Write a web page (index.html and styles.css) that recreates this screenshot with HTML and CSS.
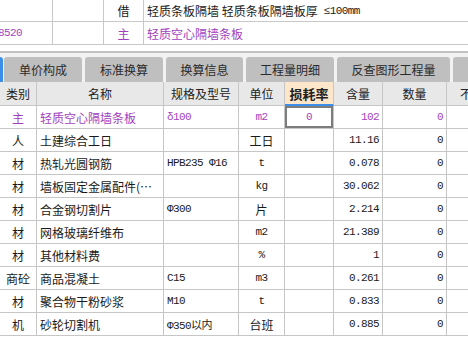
FILE: index.html
```html
<!DOCTYPE html>
<html lang="zh-CN">

<head>
    <meta charset="UTF-8">
    <title>工料机</title>
    <link rel="stylesheet" href="styles.css">
</head>

<body>
    <div class="top">
        <div class="top-row first">
            <div class="c1"></div>
            <div class="c2"></div>
            <div class="c3">借</div>
            <div class="c4">轻质条板隔墙 轻质条板隔墙板厚 <span class="mono">≤100mm</span></div>
        </div>
        <div class="top-row purple">
            <div class="c1"><span class="mono code">8520</span></div>
            <div class="c2"></div>
            <div class="c3">主</div>
            <div class="c4">轻质空心隔墙条板</div>
        </div>
    </div>

    <div class="splitter"></div>

    <div class="tabs">
        <div class="tab-edge"></div>
        <div class="tab t1">单价构成</div>
        <div class="tab t2">标准换算</div>
        <div class="tab t3">换算信息</div>
        <div class="tab t4">工程量明细</div>
        <div class="tab t5">反查图形工程量</div>
        <div class="tab t6"></div>
    </div>

    <div class="grid">
        <div class="row head">
            <div class="cell ctr">类别</div>
            <div class="cell ctr">名称</div>
            <div class="cell ctr">规格及型号</div>
            <div class="cell ctr">单位</div>
            <div class="cell ctr hot">损耗率</div>
            <div class="cell ctr">含量</div>
            <div class="cell ctr">数量</div>
            <div class="cell more">不计价</div>
        </div>
        <div class="row purple">
            <div class="cell ctr">主</div>
            <div class="cell">轻质空心隔墙条板</div>
            <div class="cell mono">δ100</div>
            <div class="cell ctr mono">m2</div>
            <div class="cell ctr mono sel">0</div>
            <div class="cell num mono">102</div>
            <div class="cell num mono">0</div>
            <div class="cell"></div>
        </div>
        <div class="row">
            <div class="cell ctr">人</div>
            <div class="cell">土建综合工日</div>
            <div class="cell mono"></div>
            <div class="cell ctr">工日</div>
            <div class="cell"></div>
            <div class="cell num mono">11.16</div>
            <div class="cell num mono">0</div>
            <div class="cell"></div>
        </div>
        <div class="row">
            <div class="cell ctr">材</div>
            <div class="cell">热轧光圆钢筋</div>
            <div class="cell mono">HPB235 Φ16</div>
            <div class="cell ctr mono">t</div>
            <div class="cell"></div>
            <div class="cell num mono">0.078</div>
            <div class="cell num mono">0</div>
            <div class="cell"></div>
        </div>
        <div class="row">
            <div class="cell ctr">材</div>
            <div class="cell">墙板固定金属配件(…</div>
            <div class="cell mono"></div>
            <div class="cell ctr mono">kg</div>
            <div class="cell"></div>
            <div class="cell num mono">30.062</div>
            <div class="cell num mono">0</div>
            <div class="cell"></div>
        </div>
        <div class="row">
            <div class="cell ctr">材</div>
            <div class="cell">合金钢切割片</div>
            <div class="cell mono">Φ300</div>
            <div class="cell ctr">片</div>
            <div class="cell"></div>
            <div class="cell num mono">2.214</div>
            <div class="cell num mono">0</div>
            <div class="cell"></div>
        </div>
        <div class="row">
            <div class="cell ctr">材</div>
            <div class="cell">网格玻璃纤维布</div>
            <div class="cell mono"></div>
            <div class="cell ctr mono">m2</div>
            <div class="cell"></div>
            <div class="cell num mono">21.389</div>
            <div class="cell num mono">0</div>
            <div class="cell"></div>
        </div>
        <div class="row">
            <div class="cell ctr">材</div>
            <div class="cell">其他材料费</div>
            <div class="cell mono"></div>
            <div class="cell ctr mono">%</div>
            <div class="cell"></div>
            <div class="cell num mono">1</div>
            <div class="cell num mono">0</div>
            <div class="cell"></div>
        </div>
        <div class="row">
            <div class="cell ctr">商砼</div>
            <div class="cell">商品混凝土</div>
            <div class="cell mono">C15</div>
            <div class="cell ctr mono">m3</div>
            <div class="cell"></div>
            <div class="cell num mono">0.261</div>
            <div class="cell num mono">0</div>
            <div class="cell"></div>
        </div>
        <div class="row">
            <div class="cell ctr">材</div>
            <div class="cell">聚合物干粉砂浆</div>
            <div class="cell mono">M10</div>
            <div class="cell ctr mono">t</div>
            <div class="cell"></div>
            <div class="cell num mono">0.833</div>
            <div class="cell num mono">0</div>
            <div class="cell"></div>
        </div>
        <div class="row">
            <div class="cell ctr">机</div>
            <div class="cell">砂轮切割机</div>
            <div class="cell mono">Φ350以内</div>
            <div class="cell ctr">台班</div>
            <div class="cell"></div>
            <div class="cell num mono">0.885</div>
            <div class="cell num mono">0</div>
            <div class="cell"></div>
        </div>
    </div>
</body>

</html>
```

FILE: styles.css
```css
* {
    margin: 0;
    padding: 0;
    box-sizing: border-box;
}

body {
    width: 468px;
    height: 353px;
    overflow: hidden;
    background: #fff;
    font-family: "Noto Sans CJK SC", sans-serif;
    font-size: 12px;
    color: #1a1a1a;
}

.mono {
    font-family: "Liberation Mono", "Noto Sans CJK SC", monospace;
    font-size: 11px;
    letter-spacing: -0.6px;
}

.purple {
    color: #a23fc0;
}

/* 上部定额行 */
.top-row {
    display: grid;
    grid-template-columns: 53px 51px 40px 1fr;
    height: 23px;
    border-bottom: 1px solid #c8c8c8;
}

.top-row.first {
    height: 22px;
}

.top-row > div {
    border-right: 1px solid #c8c8c8;
    display: flex;
    align-items: center;
    white-space: nowrap;
    overflow: hidden;
}

.top-row .c3 {
    justify-content: center;
}

.top-row .c4 {
    border-right: none;
    padding-left: 3px;
}

.top-row .c4 .mono {
    margin-left: 6px;
}

.code {
    margin-left: -2px;
}

.splitter {
    margin-top: 6px;
    height: 2px;
    background: #c2c2c2;
}

/* 页签 */
.tabs {
    display: flex;
    gap: 3px;
    padding-top: 4px;
    background: #f2f2f2;
    height: 29px;
    overflow: hidden;
}

.tab-edge {
    width: 3px;
    background: #3d8ee8;
    border-top-right-radius: 3px;
    flex-shrink: 0;
}

.tab {
    flex-shrink: 0;
    background: #bfbfbf;
    border-radius: 3px 3px 0 0;
    color: #2a2a2a;
    display: flex;
    align-items: center;
    justify-content: center;
}

.t1 {
    width: 78px;
    margin-left: -2px;
}

.t2 {
    width: 78px;
}

.t3 {
    width: 77px;
}

.t4 {
    width: 88px;
}

.t5 {
    width: 113px;
}

.t6 {
    width: 40px;
}

/* 工料机表格 */
.grid {
    width: 520px;
}

.row {
    display: grid;
    grid-template-columns: 37px 127px 75px 46px 49px 49px 64px 73px;
    height: 23px;
}

.row.head {
    height: 24px;
    background: #e8e8e8;
}

.cell {
    border-right: 1px solid #c6c6c6;
    border-bottom: 1px solid #c6c6c6;
    display: flex;
    align-items: center;
    padding-left: 3px;
    white-space: nowrap;
    overflow: hidden;
}

.head .cell {
    color: #222;
}

.ctr {
    justify-content: center;
    padding-left: 0;
}

.num {
    justify-content: flex-end;
    padding-right: 3px;
}

.head .hot {
    background: #fde6ca;
    font-weight: bold;
    font-size: 13px;
    border-bottom: 2px solid #3d8ee8;
}

.head .more {
    padding-left: 13px;
}

.sel {
    box-shadow: inset 0 0 0 2px #7d7d7d;
}
```
